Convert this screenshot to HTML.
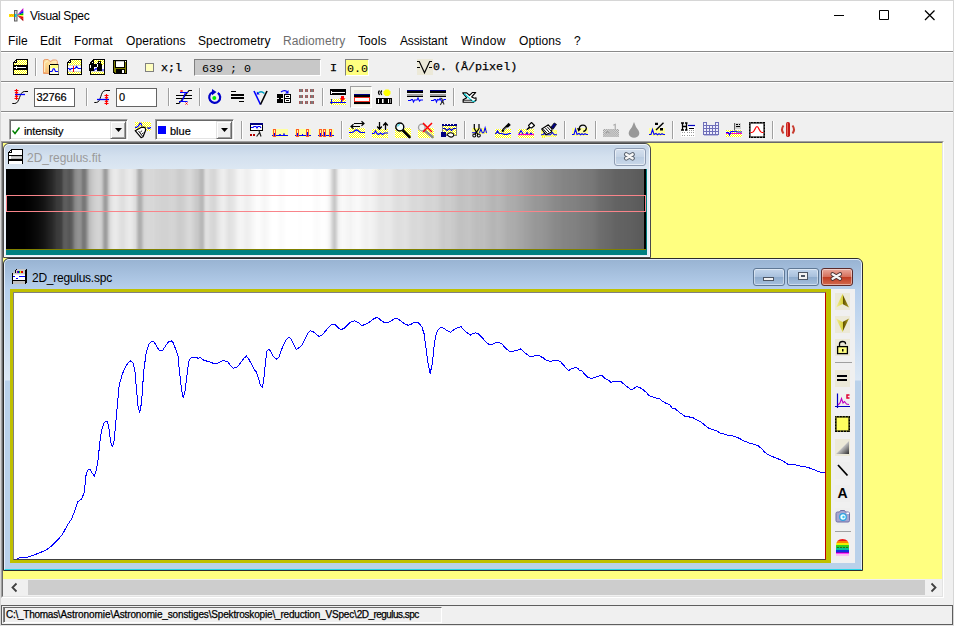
<!DOCTYPE html>
<html><head><meta charset="utf-8"><title>Visual Spec</title>
<style>
*{box-sizing:border-box;margin:0;padding:0}
html,body{width:954px;height:626px;overflow:hidden}
body{position:relative;background:#f0f0f0;font-family:"Liberation Sans",sans-serif;font-size:12px;color:#000}
.abs{position:absolute;display:block}
.t{position:absolute;white-space:pre;line-height:1}
.mono{font-family:"Liberation Mono",monospace;font-size:11.7px}
.m{letter-spacing:.1px}
.sb{-webkit-text-stroke:.25px #000}
.px{-webkit-text-stroke:.2px #000}
.hl{position:absolute;left:1px;width:952px;height:2px;border-top:1px solid #8a8a8a;border-bottom:1px solid #fff}
.vs{position:absolute;width:2px;height:18px;border-left:1px solid #a0a0a0;border-right:1px solid #fff}
.inp{position:absolute;background:#fff;border:1px solid #646464;font-size:11px}
.sunk{position:absolute;border:1px solid;border-color:#808080 #fff #fff #808080}
.ic{position:absolute;width:16px;height:16px;overflow:visible}
</style></head><body>
<!-- title + menu -->
<div class="abs" style="left:0;top:0;width:954px;height:51px;background:#fff"></div>
<div class="abs" style="left:0;top:0;width:954px;height:626px;border:1px solid #d6d6d6;border-bottom-color:#e4e4e4;pointer-events:none;z-index:50"></div>
<div class="t" id="title" style="left:30px;top:10px;font-size:12px;letter-spacing:-.35px">Visual Spec</div>
<svg class="abs" style="left:820px;top:0" width="134" height="30"><path d="M14 15.500h10M59.500 10.500h9v9h-9z" fill="none" stroke="#000" stroke-width="1"/><path d="M105 10.500l9.500 9.500M114.500 10.500l-9.500 9.500" fill="none" stroke="#000" stroke-width="1.250"/></svg>
<div id="menu">
<div class="t m" style="left:8px;top:35px">File</div>
<div class="t m" style="left:40px;top:35px">Edit</div>
<div class="t m" style="left:74px;top:35px">Format</div>
<div class="t m" style="left:126px;top:35px">Operations</div>
<div class="t m" style="left:198px;top:35px">Spectrometry</div>
<div class="t m" style="left:283px;top:35px;color:#6d6d6d">Radiometry</div>
<div class="t m" style="left:358px;top:35px">Tools</div>
<div class="t m" style="left:400px;top:35px;letter-spacing:-.15px">Assistant</div>
<div class="t m" style="left:461px;top:35px;letter-spacing:.35px">Window</div>
<div class="t m" style="left:519px;top:35px">Options</div>
<div class="t m" style="left:574px;top:35px">?</div>
</div>
<div class="hl" style="top:51px"></div>
<div class="hl" style="top:81px"></div>
<div class="hl" style="top:111px"></div>

<!-- toolbar 1 controls -->
<div class="vs" style="left:35px;top:58px"></div>
<div class="abs" style="left:145px;top:63px;width:9px;height:9px;background:#ffffc0;border:1px solid #808080"></div>
<div class="t mono sb" style="left:161px;top:63px">x;l</div>
<div class="sunk" style="left:194px;top:59px;width:127px;height:17px;background:#c8c8c8"></div>
<div class="t mono" style="left:202px;top:64px">639 ; 0</div>
<div class="t mono sb" style="left:330px;top:63px">I</div>
<div class="sunk" style="left:345px;top:59px;width:24px;height:17px;background:#ffff80"></div>
<div class="t mono" style="left:347px;top:64px">0.0</div>
<div class="t mono sb" style="left:433px;top:62px">0. (Å/pixel)</div>

<!-- toolbar 2 controls -->
<div class="inp" style="left:34px;top:88px;width:41px;height:19px"></div>
<div class="t px" style="left:36.500px;top:92px;font-size:11px;letter-spacing:-.1px">32766</div>
<div class="vs" style="left:86px;top:88px"></div>
<div class="inp" style="left:116px;top:88px;width:41px;height:19px"></div>
<div class="t px" style="left:119px;top:92px;font-size:11px">0</div>
<div class="vs" style="left:168px;top:88px"></div>
<div class="vs" style="left:199px;top:88px"></div>
<div class="vs" style="left:322px;top:88px"></div>
<div class="abs" style="left:350px;top:86px;width:22px;height:22px;background:#f7f7f2;border:1px solid;border-color:#a0a0a0 #fff #fff #a0a0a0"></div>
<div class="vs" style="left:399px;top:88px"></div>
<div class="vs" style="left:453px;top:88px"></div>

<!-- toolbar 3 controls -->
<style>.cbx{position:absolute;top:119px;height:21px;background:#fff;border:1px solid;border-color:#a0a0a0 #fff #fff #a0a0a0;box-shadow:inset 1px 1px 0 #696969,inset -1px -1px 0 #e3e3e3}
.cbb{position:absolute;top:121px;width:15px;height:18px;background:#f0f0f0;border:1px solid;border-color:#e3e3e3 #696969 #696969 #e3e3e3;box-shadow:inset 1px 1px 0 #fff,inset -1px -1px 0 #a0a0a0}</style>
<div class="cbx" style="left:9px;width:119px"></div>
<svg class="abs" style="left:12px;top:126px" width="9" height="9"><path d="M0.500 4.500l2.500 3L7.500 1.500" fill="none" stroke="#008000" stroke-width="1.500"/></svg>
<div class="t px" style="left:24px;top:126px;font-size:11px;letter-spacing:-.1px">intensity</div>
<div class="cbb" style="left:110px;width:16px"></div>
<svg class="abs" style="left:115px;top:128px" width="7" height="4"><path d="M0 0h7L3.500 4z" fill="#000"/></svg>
<div class="cbx" style="left:155px;width:79px"></div>
<div class="abs" style="left:158px;top:126px;width:8px;height:8px;background:#0000ff"></div>
<div class="t px" style="left:170px;top:126px;font-size:11px">blue</div>
<div class="cbb" style="left:216px;width:16px"></div>
<svg class="abs" style="left:221px;top:128px" width="7" height="4"><path d="M0 0h7L3.500 4z" fill="#000"/></svg>
<div class="vs" style="left:241px;top:121px"></div>
<div class="vs" style="left:341px;top:121px"></div>
<div class="vs" style="left:464px;top:121px"></div>
<div class="vs" style="left:564px;top:121px"></div>
<div class="vs" style="left:595px;top:121px"></div>
<div class="vs" style="left:672px;top:121px"></div>
<div class="vs" style="left:772px;top:121px"></div>

<svg width="0" height="0" style="position:absolute"><defs>
<pattern id="dy" width="2" height="2" patternUnits="userSpaceOnUse"><rect width="2" height="2" fill="#fff"/><rect width="1" height="1" fill="#ff0"/><rect x="1" y="1" width="1" height="1" fill="#ff0"/></pattern>
<pattern id="dg" width="2" height="2" patternUnits="userSpaceOnUse"><rect width="2" height="2" fill="#e4e4e4"/><rect width="1" height="1" fill="#9a9a9a"/><rect x="1" y="1" width="1" height="1" fill="#9a9a9a"/></pattern>
<pattern id="dw" width="2" height="2" patternUnits="userSpaceOnUse"><rect width="2" height="2" fill="#fff"/><rect width="1" height="1" fill="#f0f0f0"/><rect x="1" y="1" width="1" height="1" fill="#f0f0f0"/></pattern>
</defs></svg>
<!-- ===== toolbar 1 ===== -->
<svg class="ic" style="left:13px;top:59px" viewBox="0 0 16 16"><g shape-rendering="crispEdges"><path d="M3 0H15V16H0V3z" fill="#000"/><path d="M4 1H14V6H1V4H4z" fill="url(#dy)"/><rect x="1" y="11" width="13" height="4" fill="url(#dy)"/><rect x="1" y="8" width="12" height="1" fill="#fff"/><rect x="3" y="7" width="1" height="3" fill="#fff"/><rect x="2" y="2" width="1" height="1" fill="#fff"/></g></svg>
<svg class="ic" style="left:43px;top:59px" viewBox="0 0 16 16"><defs><linearGradient id="gf" x1="1" y1="0" x2="0" y2="1"><stop offset="0" stop-color="#fff3c8"/><stop offset=".6" stop-color="#fbd58c"/><stop offset="1" stop-color="#f3a763"/></linearGradient></defs><path d="M0.500 14.500V2.200q0-1.700 1.700-1.700h3l1.600 1.800H8.300l1-1.300h3.400q1.600 0 1.600 1.600V14.500z" fill="url(#gf)" stroke="#eb9c6a"/><path d="M1.600 13V4l3-2.300" fill="none" stroke="#fdebc0" stroke-width="1.300"/><g shape-rendering="crispEdges"><path d="M7 5H16V16H6V6z" fill="#000"/><rect x="7" y="6" width="8" height="3" fill="#ffff80"/><rect x="7" y="9" width="8" height="6" fill="#ffffe1"/><rect x="7" y="6" width="1" height="1" fill="#fff"/><rect x="15" y="5" width="1" height="10" fill="#808080"/></g><path d="M7 12.500h2l1.200-2.800 1 0 1.300 2.800H15" fill="none" stroke="#00f" stroke-width="1.100"/></svg>
<svg class="ic" style="left:67px;top:59px" viewBox="0 0 16 16"><g shape-rendering="crispEdges"><path d="M3 0H15V16H0V3z" fill="#000"/><path d="M4 1H14V6H1V4H4z" fill="url(#dy)"/><rect x="1" y="6" width="13" height="7" fill="#fff"/><rect x="1" y="6" width="13" height="1" fill="#d8d8d8"/><rect x="1" y="12" width="13" height="1" fill="#d8d8d8"/><rect x="1" y="13" width="13" height="2" fill="url(#dy)"/><rect x="2" y="2" width="1" height="1" fill="#fff"/></g><path d="M1 9.500h1l1 1.300 1.300-1.300H8l1.500-2 1.700 2H14" fill="none" stroke="#00f" stroke-width="1.100"/><rect x="6" y="7" width="1" height="6" fill="#f00" shape-rendering="crispEdges"/></svg>
<svg class="ic" style="left:89px;top:59px" viewBox="0 0 16 16"><g shape-rendering="crispEdges"><path d="M4 0H16V16H1V3z" fill="#000"/><path d="M5 1H15V6H2V4H5z" fill="url(#dy)"/><rect x="2" y="6" width="13" height="7" fill="#fff"/><rect x="2" y="13" width="13" height="2" fill="url(#dy)"/><rect x="2" y="12" width="13" height="1" fill="#d8d8d8"/></g><path d="M2 11.500h3l2-2 2 1.500h6" fill="none" stroke="#00f" stroke-width="1.100"/><g shape-rendering="crispEdges" fill="#000"><rect x="0" y="5" width="5" height="7"/><rect x="1" y="4" width="4" height="1"/><rect x="2" y="2" width="3" height="2"/><rect x="8" y="5" width="5" height="7"/><rect x="8" y="4" width="4" height="1"/><rect x="9" y="2" width="3" height="2"/><rect x="5" y="5" width="3" height="3"/><rect x="1" y="6" width="1" height="3" fill="#fff"/><rect x="8" y="5" width="1" height="3" fill="#fff"/><rect x="3" y="3" width="1" height="1" fill="#fff"/><rect x="10" y="3" width="1" height="1" fill="#fff"/></g></svg>
<svg class="ic" style="left:112px;top:59px" viewBox="0 0 16 16"><g shape-rendering="crispEdges"><path d="M1 1H15V15H2L1 14z" fill="#000"/><path d="M2 2H14V14H3L2 13z" fill="#808000"/><rect x="4" y="2" width="8" height="6" fill="#fff"/><rect x="4" y="2" width="8" height="1" fill="#c8c8c8"/><rect x="3" y="1" width="1" height="8" fill="#000"/><rect x="12" y="1" width="1" height="8" fill="#000"/><rect x="3" y="8" width="10" height="1" fill="#000"/><rect x="4" y="10" width="9" height="5" fill="#000"/><rect x="10" y="11" width="2" height="3" fill="#fff"/><rect x="13" y="2" width="1" height="1" fill="#fff"/></g></svg>
<svg class="ic" style="left:417px;top:59px" viewBox="0 0 16 16"><rect x="0" y="0" width="16" height="16" fill="#ece9d8"/><path d="M0 2.500h2.300L7.500 13.800 12.700 2.500H15M0 8.500h3M12 8.500h3" fill="none" stroke="#000" stroke-width="1.150"/></svg>
<!-- ===== toolbar 2 ===== -->
<svg class="ic" style="left:12px;top:89px" viewBox="0 0 16 16"><path d="M0.300 14.500h2.500c5 0 4.500-12 9.500-12H16" fill="none" stroke="#000" stroke-width="1"/><path d="M3 5.500h10" stroke="#00f" stroke-width="1.300"/><path d="M4.500 0v4M2.500 1.500h4M3 3l1.500 1.700L6 3M4.500 11V7M2.500 9.500h4M3 8l1.500-1.700L6 8" fill="none" stroke="#f00" stroke-width="1.100"/></svg>
<svg class="ic" style="left:94px;top:89px" viewBox="0 0 16 16"><path d="M0.300 13.500h2c5 0 4-12 9-12H16" fill="none" stroke="#000" stroke-width="1"/><path d="M3 10.500h12" stroke="#00f" stroke-width="1.300"/><path d="M12.500 5v4.500M10.500 6.500h4M11 8l1.500 1.700L14 8M12.500 16v-4.500M10.500 14.500h4M11 13l1.500-1.700L14 13" fill="none" stroke="#f00" stroke-width="1.100"/></svg>
<svg class="ic" style="left:176px;top:89px" viewBox="0 0 16 16"><path d="M0 6.500h16M0 9.500h16" stroke="#000" stroke-width="1.200"/><path d="M0 14.500h3L13 1.500h3" fill="none" stroke="#000" stroke-width="1.200"/><path d="M4 3.500h8M3 12.500h8.500M9.500 3.500L6 12.500" fill="none" stroke="#00f" stroke-width="1.200"/><path d="M4.500 1l2 2M6.500 1l-2 2M9.500 13.500l2 2M11.500 13.500l-2 2" stroke="#f00" stroke-width="1"/></svg>
<svg class="ic" style="left:206px;top:89px" viewBox="0 0 16 16"><path d="M11.800 3.800A5.500 5.500 0 1 1 6.500 3.300" fill="none" stroke="#0000c8" stroke-width="2.200"/><path d="M6 0l4.500 3L6 6.200z" fill="#0000c8"/><circle cx="8.300" cy="9" r="2" fill="#00e800"/><rect x="12" y="4" width="2" height="1" fill="#00f"/></svg>
<svg class="ic" style="left:230px;top:89px" viewBox="0 0 16 16" shape-rendering="crispEdges"><rect x="1" y="2" width="5" height="1" fill="#000"/><rect x="1" y="5" width="13" height="2" fill="#000"/><rect x="1" y="8" width="13" height="2" fill="#000"/><rect x="9" y="12" width="5" height="1" fill="#000"/></svg>
<svg class="ic" style="left:253px;top:89px" viewBox="0 0 16 16"><path d="M1 2L7.500 15.500" stroke="#00f" stroke-width="1.600"/><path d="M14 2L7.500 15.500" stroke="#000" stroke-width="1.600"/><path d="M4.500 4.500q3.500-3.500 7 0" fill="none" stroke="#00a0c0" stroke-width="1.300"/><path d="M3.800 2.500v3h3z" fill="#00f"/></svg>
<svg class="ic" style="left:276px;top:89px" viewBox="0 0 16 16"><g shape-rendering="crispEdges"><rect x="1" y="5" width="6" height="4" fill="#000"/><rect x="1" y="10" width="6" height="4" fill="#000"/><rect x="3" y="9" width="2" height="1" fill="#000"/><rect x="8" y="5" width="7" height="9" fill="#000"/><rect x="9" y="6" width="5" height="3" fill="#fff"/><rect x="9" y="10" width="5" height="3" fill="#fff"/><rect x="10" y="7" width="3" height="1" fill="#000"/><rect x="10" y="11" width="3" height="1" fill="#000"/></g><path d="M5 3q3-2.500 6-.5" fill="none" stroke="#00f" stroke-width="1.300"/><path d="M12.500 1v3.500H9z" fill="#00f"/></svg>
<svg class="ic" style="left:299px;top:89px" viewBox="0 0 17 16" shape-rendering="crispEdges"><g fill="#a65a5a"><rect x="0" y="0" width="4" height="3"/><rect x="6" y="0" width="4" height="3"/><rect x="12" y="0" width="4" height="3"/><rect x="0" y="6" width="4" height="3"/><rect x="6" y="6" width="4" height="3"/><rect x="12" y="6" width="4" height="3"/><rect x="0" y="12" width="4" height="3"/><rect x="6" y="12" width="4" height="3"/><rect x="12" y="12" width="4" height="3"/></g><g fill="#7c7c7c"><rect x="1" y="0" width="2" height="3"/><rect x="7" y="0" width="2" height="3"/><rect x="13" y="0" width="2" height="3"/><rect x="1" y="6" width="2" height="3"/><rect x="7" y="6" width="2" height="3"/><rect x="13" y="6" width="2" height="3"/><rect x="1" y="12" width="2" height="3"/><rect x="7" y="12" width="2" height="3"/><rect x="13" y="12" width="2" height="3"/></g></svg>
<svg class="ic" style="left:330px;top:89px" viewBox="0 0 16 16"><g shape-rendering="crispEdges"><rect x="0" y="0" width="16" height="6" fill="#000"/><rect x="2" y="3" width="13" height="1" fill="#fff"/><rect x="1" y="2" width="1" height="3" fill="#fff"/><rect x="0" y="10" width="16" height="6" fill="url(#dy)"/><rect x="0" y="13" width="16" height="1" fill="#00f"/><rect x="1" y="10" width="1" height="5" fill="#00f"/><rect x="11" y="11" width="1" height="3" fill="#00f"/></g><path d="M11 7h3v2.200h1.500L12.500 12 9.500 9.200H11z" fill="#f00"/></svg>
<svg class="ic" style="left:354px;top:89px" viewBox="0 0 16 16" shape-rendering="crispEdges"><rect x="0" y="1" width="16" height="15" fill="#ece9d8"/><rect x="0" y="5" width="16" height="1" fill="#000080"/><rect x="0" y="6" width="16" height="2" fill="#000"/><rect x="0" y="8" width="16" height="5" fill="#f03020"/><rect x="1" y="9" width="14" height="3" fill="#fff"/><rect x="0" y="13" width="16" height="2" fill="#000"/></svg>
<svg class="ic" style="left:376px;top:89px" viewBox="0 0 16 16"><path d="M9.500 0.500h3l2 2v2.500l-2 2h-3l-2-2V2.500z" fill="#ff0"/><path d="M3.500 1.500q-2 2 0 4.500M5.800 1.500q-2 2 0 4.500" fill="none" stroke="#000" stroke-width="1.200"/><g shape-rendering="crispEdges"><rect x="0" y="9" width="16" height="6" fill="#000"/><rect x="2" y="10" width="1" height="4" fill="#fff"/><rect x="6" y="10" width="1" height="4" fill="#fff"/><rect x="7" y="10" width="1" height="4" fill="#999"/><rect x="12" y="10" width="1" height="4" fill="#fff"/><rect x="14" y="10" width="1" height="4" fill="#888"/></g></svg>
<svg class="ic" style="left:407px;top:89px" viewBox="0 0 16 16"><g shape-rendering="crispEdges"><rect x="0" y="1" width="16" height="1" fill="#000080"/><rect x="0" y="2" width="16" height="2" fill="#000"/><rect x="0" y="5" width="16" height="2" fill="#a0a0a0"/><rect x="0" y="7" width="16" height="1" fill="#000"/></g><path d="M1 11.500h2.500l1-1 1 0 1 2.500 1-2 2.500 0 1-2 1.500 3 1-1H16" fill="none" stroke="#00f" stroke-width="1.100"/></svg>
<svg class="ic" style="left:430px;top:89px" viewBox="0 0 16 16"><g shape-rendering="crispEdges"><rect x="0" y="1" width="16" height="1" fill="#000080"/><rect x="0" y="2" width="16" height="2" fill="#000"/><rect x="0" y="5" width="16" height="2" fill="#a0a0a0"/><rect x="0" y="7" width="16" height="1" fill="#000"/></g><path d="M1 11.500h2.500l1-1 1 0 1 2.500 1-2.500 1.500.5 1-1.500 2 3.500 2-2.500H16" fill="none" stroke="#00f" stroke-width="1.100"/><path d="M10.500 9.500q1.500-.5 2 2l1.500 4M12.600 12l-2.300 4" fill="none" stroke="#333" stroke-width="1.100"/></svg>
<svg class="ic" style="left:461px;top:89px" viewBox="0 0 16 16"><g transform="translate(0.800 1.800) scale(0.900 0.820)"><path d="M1 2.500h4.500l3 3 3.500-3.500h3.500l-4.500 5.500 3 1.500 1.800-.5v3l-3 2.500H1.500v-3l4-2.500z" fill="#fff" stroke="#000" stroke-width="1.300" stroke-linejoin="round"/><path d="M2.500 3.500l9.500 9.300h3" fill="none" stroke="#00d8e0" stroke-width="1.400"/><path d="M1.500 11.500h10" stroke="#000" stroke-width="1"/></g></svg>
<!-- ===== toolbar 3 ===== -->
<svg class="ic" style="left:134px;top:121px;width:17px;height:17px" viewBox="0 0 17 17"><rect x="1" y="1" width="16" height="9" fill="url(#dy)" shape-rendering="crispEdges"/><path d="M1 6.400h1.500l2-1.500 1.500-2.700 1 .2.800 2.400M13.300 6.400l1.500 1.100 2-1.100" fill="none" stroke="#00f" stroke-width="1.200"/><path d="M7.500 6.200l3.500.2.700 2.500-2.700 6.900-1.900.9-5.900-7z" fill="#fff" stroke="#000" stroke-width="1.250" stroke-linejoin="round"/><path d="M4.500 10l4 5.200M6.300 11.200l1.800-1.500M7.600 13.200l1.800-1.500" fill="none" stroke="#000" stroke-width=".9"/></svg>
<svg class="ic" style="left:249px;top:122px" viewBox="0 0 16 16"><g shape-rendering="crispEdges"><rect x="1" y="1" width="13" height="8" fill="#000"/><rect x="1" y="1" width="13" height="2" fill="#000080"/><rect x="2" y="3" width="11" height="5" fill="#fff"/><rect x="1" y="12" width="2" height="2" fill="#b00000"/><rect x="4" y="12" width="2" height="2" fill="#b00000"/></g><path d="M2 5.500h2l1-1h2l1 1.500 1-1.500h2l1 1.500" fill="none" stroke="#00f" stroke-width="1.200"/><path d="M8.500 8.500q1.500-.5 2 1.500l1.500 4.500M10.600 10.500l-3 4" fill="none" stroke="#222" stroke-width="1.200"/></svg>
<svg class="ic" style="left:272px;top:122px" viewBox="0 0 16 16"><rect x="0" y="7" width="16" height="8" fill="#ffffa0"/><path d="M0 13.500h3.500v-3h0v3H8v-1.500h0v1.500h4v-2h0v2H16" fill="none" stroke="#00f" stroke-width="1"/><rect x="1.500" y="7.500" width="2" height="7" fill="none" stroke="#ff5a28" stroke-width="1"/><rect x="2" y="11" width="1" height="3" fill="#00f"/></svg>
<svg class="ic" style="left:295px;top:122px" viewBox="0 0 16 16"><rect x="0" y="7" width="16" height="8" fill="#ffffa0"/><path d="M0 13.500H16" fill="none" stroke="#00f" stroke-width="1"/><rect x="1.500" y="7.500" width="2" height="7" fill="none" stroke="#ff5a28"/><rect x="11.500" y="7.500" width="2" height="7" fill="none" stroke="#ff5a28"/><rect x="2" y="11" width="1" height="3" fill="#00f"/><rect x="12" y="10" width="1" height="4" fill="#00f"/><rect x="7" y="12" width="1" height="2" fill="#00f"/></svg>
<svg class="ic" style="left:318px;top:122px" viewBox="0 0 16 16"><rect x="0" y="7" width="16" height="8" fill="#ffffa0"/><path d="M0 13.500H16" fill="none" stroke="#00f" stroke-width="1"/><rect x="1.500" y="7.500" width="2" height="7" fill="none" stroke="#ff5a28"/><rect x="5.500" y="7.500" width="2" height="7" fill="none" stroke="#ff5a28"/><rect x="11.500" y="7.500" width="2" height="7" fill="none" stroke="#ff5a28"/><rect x="2" y="11" width="1" height="3" fill="#00f"/><rect x="6" y="10" width="1" height="4" fill="#00f"/><rect x="12" y="10" width="1" height="4" fill="#00f"/></svg>
<svg class="ic" style="left:349px;top:122px" viewBox="0 0 16 16"><rect x="0" y="6" width="16" height="10" fill="url(#dy)" shape-rendering="crispEdges"/><path d="M0 10.500h2.500q2-.2 3-1.500 2-2 4 0 1.200 1.400 3 1.500H16" fill="none" stroke="#00f" stroke-width="1.200"/><path d="M5 1.500h10M12.500-.8l2.500 2.300-2.500 2.300M2 4.500h9M4.500 2.200L2 4.500l2.500 2.300" fill="none" stroke="#000" stroke-width="1.200"/></svg>
<svg class="ic" style="left:372px;top:122px" viewBox="0 0 16 16"><rect x="0" y="7" width="16" height="9" fill="url(#dy)" shape-rendering="crispEdges"/><path d="M0 11.500h2l1.500-2.500 1.500 2.500 1.500 1 2-1.500 2 1.500 2-1.500H16" fill="none" stroke="#00f" stroke-width="1.200"/><path d="M7.500 0v7M5.200 4.500l2.300 2.700 2.300-2.700M13.500 8V1M11.200 3.500L13.500.8l2.300 2.700" fill="none" stroke="#000" stroke-width="1.300"/></svg>
<svg class="ic" style="left:395px;top:122px" viewBox="0 0 16 16"><rect x="0" y="6" width="16" height="10" fill="url(#dy)" shape-rendering="crispEdges"/><path d="M7.500 8L14.500 15" stroke="#000" stroke-width="2.600" stroke-linecap="round"/><circle cx="4.800" cy="5" r="4" fill="#f4ffff" stroke="#000" stroke-width="1.400"/><path d="M2.500 4.500q.5-2 2.500-2" fill="none" stroke="#40d0e0" stroke-width="1.200"/></svg>
<svg class="ic" style="left:418px;top:122px" viewBox="0 0 16 16"><rect x="0" y="6" width="16" height="10" fill="url(#dy)" shape-rendering="crispEdges"/><path d="M6.500 8.500L14.500 15" stroke="#8a8a8a" stroke-width="2.600" stroke-linecap="round"/><circle cx="3.800" cy="5.500" r="3.300" fill="#f0f0f0" stroke="#a0a0a0" stroke-width="1.300"/><path d="M5 1l9 9M14 1L5 10" stroke="#f00" stroke-width="1.500"/></svg>
<svg class="ic" style="left:441px;top:122px" viewBox="0 0 16 16"><g shape-rendering="crispEdges"><rect x="1" y="2" width="15" height="12" fill="#808080"/><rect x="1" y="2" width="15" height="2" fill="#000080"/><rect x="2" y="4" width="13" height="9" fill="url(#dy)"/><rect x="0" y="10" width="5" height="5" fill="#000080"/><rect x="3" y="2" width="1" height="1" fill="#fff"/><rect x="6" y="2" width="1" height="1" fill="#fff"/><rect x="9" y="2" width="1" height="1" fill="#fff"/><rect x="12" y="2" width="1" height="1" fill="#fff"/></g><path d="M2 6.500h2l2 2 2.500-2 2 2 2-2H15" fill="none" stroke="#0000c0" stroke-width="1.200"/><path d="M6 12.500q2-2.500 5-1.500 3 1 1 3.500-3 2-6-2z" fill="#fff" stroke="#000" stroke-width="1.100"/></svg>
<svg class="ic" style="left:471px;top:122px" viewBox="0 0 17 17"><rect x="1" y="6" width="16" height="7" fill="url(#dy)" shape-rendering="crispEdges"/><path d="M1 11.500h3l1.500-1M9 11.500l1.500-4 1.500 4 1.500 0 1.500-5.500 1.500 5.500" fill="none" stroke="#00f" stroke-width="1.100"/><path d="M3.500 2v5l4 6.500M8.500 2v5l-4.500 6.500" fill="none" stroke="#000" stroke-width="1.300"/><circle cx="3.500" cy="14.300" r="1.600" fill="none" stroke="#000" stroke-width="1.100"/><circle cx="8.300" cy="14.300" r="1.600" fill="none" stroke="#000" stroke-width="1.100"/></svg>
<svg class="ic" style="left:495px;top:122px" viewBox="0 0 16 16"><rect x="0" y="7" width="16" height="9" fill="url(#dy)" shape-rendering="crispEdges"/><path d="M0 11.500h1l1.500-2.500 1.500 2.500h3l2 .800h3.500l1.500-.800H16" fill="none" stroke="#00f" stroke-width="1.200"/><path d="M7.300 9.700l1.200-2.200 3.500-3.500" stroke="#000" stroke-width="2.200" fill="none" stroke-linejoin="round"/><path d="M10.800 3.800l2.800-3 2.200 2.200-3 2.800z" fill="#000"/><path d="M8.600 8l2.800-2.800" stroke="#fff" stroke-width=".7"/></svg>
<svg class="ic" style="left:518px;top:122px" viewBox="0 0 16 16"><rect x="0" y="7" width="16" height="9" fill="url(#dy)" shape-rendering="crispEdges"/><path d="M0 12.500H16" stroke="#ff00c8" stroke-width="1.300"/><path d="M1 12l2-3.500 2 3.500M8 12l1-1.500 1 1.500M12 12l1-1 1 1" fill="none" stroke="#00f" stroke-width="1.100"/><path d="M9 7.500l2.500-2.500-1-1.500 3-3 3 3-3 2.500-1.500-.5z" fill="#fff" stroke="#000" stroke-width="1.100" stroke-linejoin="round"/></svg>
<svg class="ic" style="left:541px;top:122px" viewBox="0 0 17 17"><rect x="0" y="8" width="17" height="8" fill="url(#dy)" shape-rendering="crispEdges"/><path d="M0 13.500h2l1.500-1.500 1.500 1.500h5l2-2.500 2 2.500H17" fill="none" stroke="#00f" stroke-width="1.100"/><path d="M0.800 7.500l7-4.500 4 4.500-1 3.500-5.500 2.500z" fill="#fff" stroke="#000" stroke-width="1.200" stroke-linejoin="round"/><path d="M2.500 7.500l4 4.500M4.500 6.200l4 4.500M6.500 5l4 4.500" stroke="#000" stroke-width="1"/><path d="M10.500 5.500l3.500-4.500 2.500 1.500-3.500 5z" fill="#000080" stroke="#000" stroke-width=".8"/><rect x="1" y="14" width="1" height="3" fill="#ff0"/><rect x="3" y="14" width="1" height="3" fill="#ff0"/></svg>
<svg class="ic" style="left:572px;top:122px" viewBox="0 0 16 16"><rect x="0" y="6" width="16" height="8" fill="#ffffa0"/><path d="M0 12.500h2l1.500-5.500 1.500 5.500 2-1 1.500 1.200 1.500-1 1.500 1 1.500-1 1.500.800H16" fill="none" stroke="#00f" stroke-width="1.100"/><path d="M7.200 7.500C7.200 4.500 9 3.200 11 3.200S14.600 4.500 14.300 6.700 13 9.300 11.300 9.500" fill="none" stroke="#000" stroke-width="1.300"/><path d="M5 6l4.300.800-2.800 3z" fill="#000"/></svg>
<svg class="ic" style="left:603px;top:122px" viewBox="0 0 17 16"><rect x="0" y="7" width="17" height="8" fill="url(#dg)" shape-rendering="crispEdges"/><path d="M11 3l2-1v5.500" fill="none" stroke="#a8a8a8" stroke-width="1.200"/><path d="M3 11.500l2-2 2 2" fill="none" stroke="#909090" stroke-width="1"/></svg>
<svg class="ic" style="left:626px;top:122px" viewBox="0 0 16 16"><path d="M8 0q1.500 5 4.500 8.500 2 3.500-.8 6-3.700 2.500-7.400 0-2.800-2.500-.8-6Q6.500 5 8 0z" fill="#989898"/></svg>
<svg class="ic" style="left:649px;top:122px" viewBox="0 0 16 16"><rect x="0" y="6" width="16" height="8" fill="#ffffa0"/><path d="M0 12.500h2l1.500-5 1.500 5 2-1 1.500 1.200 1.500-1 1.500 1 1.500-1 1.500.8H16" fill="none" stroke="#00f" stroke-width="1.100"/><path d="M6 1.500h3M14.500.8L7 8" stroke="#000" stroke-width="1.400"/><rect x="6" y="1" width="3" height="2" fill="#000"/><rect x="11" y="6" width="3" height="2.500" fill="#000"/></svg>
<svg class="ic" style="left:680px;top:122px" viewBox="0 0 16 16"><rect x="1" y="4" width="14" height="11" fill="#fff"/><path d="M1 1h3M1 8h3M5 1h2.500M5 8h2.500M2.500 1v7M6.500 1v7M2.500 4.500h4" stroke="#000" stroke-width="1.300"/><path d="M8 3.500h7" stroke="#0000c0" stroke-width="1.200"/><path d="M9 6.500h5" stroke="#000" stroke-width="1"/><path d="M2 10.500h3M7 10.500h7M2 13.500h3M7 13.500h7M9 8.500h5" stroke="#9a9a9a" stroke-width="1" stroke-dasharray="1 1"/></svg>
<svg class="ic" style="left:703px;top:122px" viewBox="0 0 16 16"><g shape-rendering="crispEdges"><path d="M0 0H4V3H12V0H16V13H0z" fill="#6f6fb8"/><rect x="1" y="13" width="14" height="1" fill="#b8b8dc"/><g fill="#eeeefc"><rect x="1" y="1" width="2" height="2"/><rect x="13" y="1" width="2" height="2"/><rect x="1" y="4" width="2" height="2"/><rect x="4" y="4" width="2" height="2"/><rect x="7" y="4" width="2" height="2"/><rect x="10" y="4" width="2" height="2"/><rect x="13" y="4" width="2" height="2"/><rect x="1" y="7" width="2" height="2"/><rect x="4" y="7" width="2" height="2"/><rect x="7" y="7" width="2" height="2"/><rect x="10" y="7" width="2" height="2"/><rect x="13" y="7" width="2" height="2"/><rect x="1" y="10" width="2" height="2"/><rect x="4" y="10" width="2" height="2"/><rect x="7" y="10" width="2" height="2"/><rect x="10" y="10" width="2" height="2"/><rect x="13" y="10" width="2" height="2"/></g></g></svg>
<svg class="ic" style="left:726px;top:122px" viewBox="0 0 16 16"><g shape-rendering="crispEdges"><rect x="0" y="8" width="16" height="7" fill="url(#dy)"/><rect x="0" y="11" width="16" height="1" fill="#ff00c8"/><rect x="8" y="1" width="7" height="6" fill="#d0d0d0"/><rect x="8" y="1" width="1" height="7" fill="#606060"/><rect x="10" y="2" width="2" height="1" fill="#000"/><rect x="13" y="2" width="1" height="1" fill="#000"/><rect x="10" y="4" width="4" height="1" fill="#000"/></g><path d="M0 10.500h2.500l1 2.500 1.500-3.500h3l1.500-.5 1.500 1H16" fill="none" stroke="#00f" stroke-width="1.100"/></svg>
<svg class="ic" style="left:749px;top:122px" viewBox="0 0 16 16"><rect x="0.800" y="0.800" width="14.400" height="14.400" fill="#fff" stroke="#000" stroke-width="1.600"/><rect x="0.800" y="0.800" width="14.400" height="14.400" fill="none" stroke="#fff" stroke-width="0.600" stroke-dasharray="1 2"/><path d="M1.500 10.500h1.500q1.500 0 2.800-3 1.300-3 2.200-3t2.200 3q1.300 3 2.800 3h1.500" fill="none" stroke="#f00" stroke-width="1.200"/></svg>
<svg class="ic" style="left:780px;top:122px" viewBox="0 0 16 16"><rect x="6" y="0" width="4" height="15" rx="1.800" fill="#c41818"/><rect x="6.800" y="1" width="1.200" height="13" fill="#e86a5a"/><path d="M3.500 3.500q-3 4 0 8M12.500 3.500q3 4 0 8" fill="none" stroke="#c83c30" stroke-width="2"/></svg>
<!-- ===== side toolbar (window 2) ===== -->
<div id="side" style="position:absolute;left:0;top:0;z-index:5">
<svg class="ic" style="left:835px;top:293px;height:17px" viewBox="0 0 16 17"><rect width="15" height="17" fill="#ece9d8"/><defs><linearGradient id="ga" x1="0" x2="1"><stop offset="0" stop-color="#f4f0a0"/><stop offset=".5" stop-color="#d8d040"/><stop offset=".55" stop-color="#605000"/><stop offset="1" stop-color="#b0a020"/></linearGradient></defs><path d="M7.500 1L14 14.500 7.500 11 1 14.500z" fill="url(#ga)"/></svg>
<svg class="ic" style="left:835px;top:316px;height:17px" viewBox="0 0 16 17"><rect width="15" height="17" fill="#ece9d8"/><path d="M7.500 16L14 2.500 7.500 6 1 2.500z" fill="url(#ga)"/></svg>
<svg class="ic" style="left:835px;top:339px;height:17px" viewBox="0 0 16 17"><rect width="15" height="17" fill="#ece9d8"/><path d="M4.500 7.500V4.800q0-2.300 3-2.300 3 0 3 2v.8" fill="none" stroke="#000" stroke-width="1.300"/><rect x="2.600" y="7.600" width="9.800" height="7" fill="#ffff80" stroke="#000" stroke-width="1.300"/><rect x="7" y="10" width="1.500" height="2.500" fill="#000"/></svg>
<svg class="ic" style="left:835px;top:370px;height:17px" viewBox="0 0 16 17" shape-rendering="crispEdges"><rect width="15" height="17" fill="#ece9d8"/><rect x="2" y="5" width="10" height="2" fill="#000"/><rect x="2" y="9" width="10" height="2" fill="#000"/><rect x="2" y="5" width="10" height="2" fill="#000"/></svg>
<svg class="ic" style="left:835px;top:393px;height:17px" viewBox="0 0 16 17"><path d="M2.500 0.500v14.500M0 13.500h15" stroke="#0000c0" stroke-width="1.200" fill="none"/><path d="M3 12l2-2 1.500-4.500L8 10l1.500-1.500 2 2.500 2.500.5" fill="none" stroke="#c000c0" stroke-width="1.100"/><path d="M14.500 2H12v3h2.500" fill="none" stroke="#e00030" stroke-width="1.500"/></svg>
<svg class="ic" style="left:835px;top:416px" viewBox="0 0 16 16"><rect x="0.800" y="0.800" width="13.400" height="14.400" fill="#ffff60" stroke="#000" stroke-width="1.600"/><rect x="0.800" y="0.800" width="13.400" height="14.400" fill="none" stroke="#ffff60" stroke-width="0.700" stroke-dasharray="1 2"/></svg>
<svg class="ic" style="left:835px;top:439px;height:17px" viewBox="0 0 16 17"><rect width="15" height="17" fill="#ece9d8"/><defs><linearGradient id="gg" x1="0" y1="0" x2="1" y2="1"><stop offset=".35" stop-color="#f0f0f0"/><stop offset="1" stop-color="#303030"/></linearGradient></defs><path d="M14 2V15H1z" fill="url(#gg)"/></svg>
<svg class="ic" style="left:835px;top:462px;height:17px" viewBox="0 0 16 17"><rect width="15" height="17" fill="#eeeeee"/><path d="M3 3l9.500 10.500" stroke="#000" stroke-width="1.800"/></svg>
<svg class="ic" style="left:835px;top:485px;height:17px" viewBox="0 0 16 17"><rect width="15" height="17" fill="#eeeeee"/><text x="7.500" y="13" text-anchor="middle" font-family="Liberation Sans" font-weight="bold" font-size="14" fill="#000">A</text></svg>
<svg class="ic" style="left:835px;top:508px;height:17px" viewBox="0 0 16 17"><rect width="15" height="17" fill="#eeeeee"/><path d="M1 5.500q0-1.500 1.500-1.500h2l1-1.500h4l1 1.500H13q1.500 0 1.500 1.500v7q0 1.500-1.500 1.500H2.500Q1 14 1 12.500z" fill="#a6a6d0" stroke="#7070a8" stroke-width="1"/><circle cx="8" cy="9" r="3.300" fill="#e8ffff" stroke="#30a0e0" stroke-width="1.300"/><circle cx="8.500" cy="9" r="1.200" fill="#40c0f0"/><rect x="11.500" y="4.500" width="2.500" height="1.500" fill="#fff"/></svg>
<svg class="ic" style="left:835px;top:538px;height:18px" viewBox="0 0 16 18"><defs><clipPath id="dome"><path d="M1 18V8q0-7 6.500-7T14 8v10z"/></clipPath></defs><g clip-path="url(#dome)" shape-rendering="crispEdges"><rect y="0" width="16" height="3" fill="#f01818"/><rect y="3" width="16" height="2" fill="#ff8000"/><rect y="5" width="16" height="2" fill="#f0f000"/><rect y="7" width="16" height="3" fill="#30d020"/><rect y="10" width="16" height="2" fill="#00c0a0"/><rect y="12" width="16" height="2" fill="#1030e0"/><rect y="14" width="16" height="1" fill="#8000c0"/><rect y="15" width="16" height="1" fill="#ff40ff"/><rect y="16" width="16" height="2" fill="#f8c0f0"/></g><path d="M2 9.500h11" stroke="#207020" stroke-width="1" stroke-dasharray="2 1"/></svg>
</div>
<!-- app icon -->
<svg class="abs" style="left:8px;top:7px" width="17" height="16" viewBox="0 0 17 16"><rect x="1" y="7" width="6" height="3" fill="#ffe000"/><rect x="2" y="8" width="1" height="1" fill="#ff9000"/><rect x="4" y="8" width="1" height="1" fill="#ff9000"/><rect x="3" y="7" width="1" height="1" fill="#ffa000"/><path d="M9 8.300L15.300 1v2.700z" fill="#c000c8"/><path d="M9 8.300L15.300 3.700v2.400z" fill="#0000f8"/><path d="M9 8.300L15.300 6.100v1.900z" fill="#00c000"/><path d="M9 8.300L15.300 8v1.800z" fill="#ffff30"/><path d="M9 8.300L15.300 9.800v2.400z" fill="#f00000"/><path d="M9 8.300L15.300 12.200v2z" fill="#b00000"/><rect x="6.500" y="3.500" width="2.500" height="10.500" fill="#d8d8d8" stroke="#606060" stroke-width="1"/><rect x="7" y="7" width="1.500" height="3" fill="#00d0d8"/></svg>
<div id="wicons" style="position:absolute;left:0;top:0;z-index:6">
<svg class="ic" style="left:8px;top:149px" viewBox="0 0 16 16"><g shape-rendering="crispEdges"><path d="M3 0H15V15H0V3z" fill="#000"/><path d="M4 1H14V6H1V4H4z" fill="#fff"/><rect x="2" y="2" width="1" height="1" fill="#fff"/><rect x="1" y="7" width="13" height="3" fill="#b4b4b4"/><rect x="3" y="8" width="11" height="1" fill="#d4d4d4"/><rect x="1" y="7" width="2" height="3" fill="#fff"/><rect x="1" y="12" width="13" height="3" fill="#fff"/></g></svg>
<svg class="ic" style="left:12px;top:268px" viewBox="0 0 16 16"><g shape-rendering="crispEdges"><path d="M1 7V4L4 1H13V7z" fill="#c8c8c8"/><rect x="1" y="6" width="12" height="1" fill="#e8e8e8"/><rect x="0" y="5" width="1" height="11" fill="#000"/><rect x="3" y="2" width="1" height="3" fill="#000"/><rect x="4" y="1" width="1" height="1" fill="#000"/><path d="M13 2L15 1V14L13 16z" fill="#000"/><rect x="5" y="3" width="1" height="2" fill="#8000a0"/><rect x="6" y="3" width="1" height="2" fill="#0000f0"/><rect x="7" y="3" width="1" height="2" fill="#00b000"/><rect x="8" y="3" width="1" height="2" fill="#f0f000"/><rect x="9" y="3" width="2" height="2" fill="#e00000"/><rect x="1" y="7" width="12" height="5" fill="#fff"/><rect x="1" y="8" width="2" height="1" fill="#00f"/><rect x="7" y="8" width="6" height="1" fill="#00f"/><rect x="4" y="10" width="2" height="1" fill="#00f"/><rect x="1" y="12" width="12" height="1" fill="#000"/><rect x="1" y="13" width="12" height="3" fill="#c0c0c0"/></g></svg>
</div>


<!-- MDI client -->
<div class="abs" style="left:1px;top:141px;width:943px;height:457px;border:1px solid;border-color:#a0a0a0 #fff #fff #a0a0a0"></div>
<div class="abs" style="left:2px;top:142px;width:941px;height:455px;border:1px solid;border-color:#696969 #e3e3e3 #e3e3e3 #696969;background:#ffff80"></div>

<!-- window 1 : fit -->
<div class="abs" style="left:3px;top:143px;width:648px;height:115px;border:1px solid #4a4a4a;border-radius:6px 6px 0 0;background:linear-gradient(#c2d3e6 0,#d3e0ee 12px,#dde8f3 26px,#e6eef7 27px);overflow:hidden">
 <div class="abs" style="left:0;top:0;right:0;bottom:0;border:1px solid #f4f8fc;border-radius:5px 5px 0 0"></div>
</div>
<div class="t" id="t1" style="left:27px;top:152px;font-size:12px;color:#9a9a9a">2D_regulus.fit</div>
<div class="abs" style="left:614px;top:148px;width:32px;height:18px;border:1px solid #8e9cb2;border-radius:3px;background:linear-gradient(#d5e0ee 0,#c4d3e5 50%,#b9cbe0 51%,#c9d8e9 100%);box-shadow:inset 0 0 0 1px rgba(255,255,255,.55)"></div>
<svg class="abs" style="left:623px;top:152px" width="13" height="10"><path d="M3.200 2.400l6.400 4M9.600 2.400l-6.400 4" stroke="#5a626e" stroke-width="4.400" stroke-linecap="round"/><path d="M3.200 2.400l6.400 4M9.600 2.400l-6.400 4" stroke="#f6f6f6" stroke-width="2.500" stroke-linecap="round"/></svg>
<div class="abs" style="left:6px;top:169px;width:641px;height:86px;background:#008080"></div>
<div class="abs" style="left:6px;top:169px;width:640px;height:81px;background:#000;border-right:1px solid #808000;border-bottom:1px solid #808000"></div>
<svg class="abs" style="left:6px;top:169px" width="640" height="80" shape-rendering="crispEdges"><rect x="0" width="19" height="80" fill="#000000"/><rect x="19" width="1" height="80" fill="#010101"/><rect x="20" width="2" height="80" fill="#020202"/><rect x="22" width="2" height="80" fill="#030303"/><rect x="24" width="1" height="80" fill="#040404"/><rect x="25" width="1" height="80" fill="#050505"/><rect x="26" width="1" height="80" fill="#060606"/><rect x="27" width="1" height="80" fill="#070707"/><rect x="28" width="1" height="80" fill="#080808"/><rect x="29" width="1" height="80" fill="#090909"/><rect x="30" width="1" height="80" fill="#0a0a0a"/><rect x="31" width="1" height="80" fill="#0b0b0b"/><rect x="32" width="1" height="80" fill="#0c0c0c"/><rect x="33" width="1" height="80" fill="#0e0e0e"/><rect x="34" width="1" height="80" fill="#0f0f0f"/><rect x="35" width="1" height="80" fill="#111111"/><rect x="36" width="1" height="80" fill="#121212"/><rect x="37" width="1" height="80" fill="#141414"/><rect x="38" width="1" height="80" fill="#161616"/><rect x="39" width="1" height="80" fill="#181818"/><rect x="40" width="1" height="80" fill="#1b1b1b"/><rect x="41" width="1" height="80" fill="#1d1d1d"/><rect x="42" width="1" height="80" fill="#202020"/><rect x="43" width="1" height="80" fill="#222222"/><rect x="44" width="1" height="80" fill="#242424"/><rect x="45" width="1" height="80" fill="#262626"/><rect x="46" width="1" height="80" fill="#292929"/><rect x="47" width="1" height="80" fill="#2d2d2d"/><rect x="48" width="1" height="80" fill="#303030"/><rect x="49" width="1" height="80" fill="#343434"/><rect x="50" width="1" height="80" fill="#393939"/><rect x="51" width="1" height="80" fill="#3a3a3a"/><rect x="52" width="1" height="80" fill="#3b3b3b"/><rect x="53" width="1" height="80" fill="#3c3c3c"/><rect x="54" width="1" height="80" fill="#3f3f3f"/><rect x="55" width="1" height="80" fill="#424242"/><rect x="56" width="1" height="80" fill="#4d4d4d"/><rect x="57" width="1" height="80" fill="#585858"/><rect x="58" width="1" height="80" fill="#5c5c5c"/><rect x="59" width="2" height="80" fill="#5d5d5d"/><rect x="61" width="1" height="80" fill="#5a5a5a"/><rect x="62" width="1" height="80" fill="#585858"/><rect x="63" width="1" height="80" fill="#565656"/><rect x="64" width="1" height="80" fill="#595959"/><rect x="65" width="1" height="80" fill="#5d5d5d"/><rect x="66" width="1" height="80" fill="#666666"/><rect x="67" width="1" height="80" fill="#727272"/><rect x="68" width="1" height="80" fill="#7f7f7f"/><rect x="69" width="1" height="80" fill="#888888"/><rect x="70" width="1" height="80" fill="#8c8c8c"/><rect x="71" width="1" height="80" fill="#909090"/><rect x="72" width="2" height="80" fill="#929292"/><rect x="74" width="1" height="80" fill="#8f8f8f"/><rect x="75" width="1" height="80" fill="#888888"/><rect x="76" width="1" height="80" fill="#7c7c7c"/><rect x="77" width="2" height="80" fill="#787878"/><rect x="79" width="1" height="80" fill="#7f7f7f"/><rect x="80" width="1" height="80" fill="#8d8d8d"/><rect x="81" width="1" height="80" fill="#9d9d9d"/><rect x="82" width="1" height="80" fill="#acacac"/><rect x="83" width="1" height="80" fill="#bababa"/><rect x="84" width="1" height="80" fill="#bfbfbf"/><rect x="85" width="1" height="80" fill="#c4c4c4"/><rect x="86" width="1" height="80" fill="#c8c8c8"/><rect x="87" width="1" height="80" fill="#cbcbcb"/><rect x="88" width="1" height="80" fill="#cecece"/><rect x="89" width="1" height="80" fill="#d0d0d0"/><rect x="90" width="1" height="80" fill="#d2d2d2"/><rect x="91" width="1" height="80" fill="#d3d3d3"/><rect x="92" width="1" height="80" fill="#d4d4d4"/><rect x="93" width="1" height="80" fill="#d3d3d3"/><rect x="94" width="1" height="80" fill="#d0d0d0"/><rect x="95" width="1" height="80" fill="#cacaca"/><rect x="96" width="1" height="80" fill="#bdbdbd"/><rect x="97" width="1" height="80" fill="#adadad"/><rect x="98" width="1" height="80" fill="#a0a0a0"/><rect x="99" width="1" height="80" fill="#9c9c9c"/><rect x="100" width="1" height="80" fill="#a2a2a2"/><rect x="101" width="1" height="80" fill="#b0b0b0"/><rect x="102" width="1" height="80" fill="#c4c4c4"/><rect x="103" width="1" height="80" fill="#d1d1d1"/><rect x="104" width="1" height="80" fill="#dcdcdc"/><rect x="105" width="1" height="80" fill="#e1e1e1"/><rect x="106" width="1" height="80" fill="#e5e5e5"/><rect x="107" width="1" height="80" fill="#e8e8e8"/><rect x="108" width="1" height="80" fill="#e9e9e9"/><rect x="109" width="1" height="80" fill="#eaeaea"/><rect x="110" width="1" height="80" fill="#e9e9e9"/><rect x="111" width="1" height="80" fill="#e7e7e7"/><rect x="112" width="1" height="80" fill="#e5e5e5"/><rect x="113" width="1" height="80" fill="#e2e2e2"/><rect x="114" width="1" height="80" fill="#e1e1e1"/><rect x="115" width="3" height="80" fill="#dfdfdf"/><rect x="118" width="1" height="80" fill="#e1e1e1"/><rect x="119" width="1" height="80" fill="#e4e4e4"/><rect x="120" width="1" height="80" fill="#e6e6e6"/><rect x="121" width="1" height="80" fill="#e7e7e7"/><rect x="122" width="1" height="80" fill="#e9e9e9"/><rect x="123" width="2" height="80" fill="#eaeaea"/><rect x="125" width="1" height="80" fill="#e8e8e8"/><rect x="126" width="1" height="80" fill="#e6e6e6"/><rect x="127" width="1" height="80" fill="#e2e2e2"/><rect x="128" width="1" height="80" fill="#dfdfdf"/><rect x="129" width="1" height="80" fill="#dbdbdb"/><rect x="130" width="1" height="80" fill="#cecece"/><rect x="131" width="1" height="80" fill="#c1c1c1"/><rect x="132" width="1" height="80" fill="#b4b4b4"/><rect x="133" width="1" height="80" fill="#aeaeae"/><rect x="134" width="1" height="80" fill="#afafaf"/><rect x="135" width="1" height="80" fill="#b5b5b5"/><rect x="136" width="1" height="80" fill="#c1c1c1"/><rect x="137" width="1" height="80" fill="#cccccc"/><rect x="138" width="1" height="80" fill="#d4d4d4"/><rect x="139" width="1" height="80" fill="#d6d6d6"/><rect x="140" width="1" height="80" fill="#d7d7d7"/><rect x="141" width="3" height="80" fill="#d8d8d8"/><rect x="144" width="3" height="80" fill="#d7d7d7"/><rect x="147" width="1" height="80" fill="#d8d8d8"/><rect x="148" width="1" height="80" fill="#d6d6d6"/><rect x="149" width="1" height="80" fill="#d5d5d5"/><rect x="150" width="3" height="80" fill="#d4d4d4"/><rect x="153" width="2" height="80" fill="#d3d3d3"/><rect x="155" width="7" height="80" fill="#d2d2d2"/><rect x="162" width="1" height="80" fill="#d3d3d3"/><rect x="163" width="2" height="80" fill="#d4d4d4"/><rect x="165" width="1" height="80" fill="#d5d5d5"/><rect x="166" width="2" height="80" fill="#d4d4d4"/><rect x="168" width="1" height="80" fill="#d3d3d3"/><rect x="169" width="1" height="80" fill="#d2d2d2"/><rect x="170" width="1" height="80" fill="#d0d0d0"/><rect x="171" width="1" height="80" fill="#cecece"/><rect x="172" width="1" height="80" fill="#cdcdcd"/><rect x="173" width="2" height="80" fill="#cccccc"/><rect x="175" width="1" height="80" fill="#cdcdcd"/><rect x="176" width="1" height="80" fill="#cecece"/><rect x="177" width="1" height="80" fill="#cfcfcf"/><rect x="178" width="1" height="80" fill="#d1d1d1"/><rect x="179" width="1" height="80" fill="#d3d3d3"/><rect x="180" width="1" height="80" fill="#d5d5d5"/><rect x="181" width="1" height="80" fill="#d7d7d7"/><rect x="182" width="1" height="80" fill="#d8d8d8"/><rect x="183" width="1" height="80" fill="#d9d9d9"/><rect x="184" width="1" height="80" fill="#d8d8d8"/><rect x="185" width="1" height="80" fill="#d6d6d6"/><rect x="186" width="1" height="80" fill="#d3d3d3"/><rect x="187" width="1" height="80" fill="#d1d1d1"/><rect x="188" width="1" height="80" fill="#cecece"/><rect x="189" width="1" height="80" fill="#cbcbcb"/><rect x="190" width="1" height="80" fill="#c9c9c9"/><rect x="191" width="1" height="80" fill="#c8c8c8"/><rect x="192" width="1" height="80" fill="#c4c4c4"/><rect x="193" width="1" height="80" fill="#bfbfbf"/><rect x="194" width="1" height="80" fill="#bababa"/><rect x="195" width="1" height="80" fill="#b8b8b8"/><rect x="196" width="1" height="80" fill="#b9b9b9"/><rect x="197" width="1" height="80" fill="#c2c2c2"/><rect x="198" width="1" height="80" fill="#d0d0d0"/><rect x="199" width="1" height="80" fill="#dcdcdc"/><rect x="200" width="2" height="80" fill="#e0e0e0"/><rect x="202" width="1" height="80" fill="#dfdfdf"/><rect x="203" width="1" height="80" fill="#dcdcdc"/><rect x="204" width="1" height="80" fill="#d9d9d9"/><rect x="205" width="1" height="80" fill="#d8d8d8"/><rect x="206" width="1" height="80" fill="#d7d7d7"/><rect x="207" width="1" height="80" fill="#d6d6d6"/><rect x="208" width="1" height="80" fill="#d7d7d7"/><rect x="209" width="1" height="80" fill="#d9d9d9"/><rect x="210" width="1" height="80" fill="#dddddd"/><rect x="211" width="1" height="80" fill="#e1e1e1"/><rect x="212" width="1" height="80" fill="#e4e4e4"/><rect x="213" width="1" height="80" fill="#e7e7e7"/><rect x="214" width="1" height="80" fill="#eaeaea"/><rect x="215" width="1" height="80" fill="#ececec"/><rect x="216" width="1" height="80" fill="#ededed"/><rect x="217" width="1" height="80" fill="#eeeeee"/><rect x="218" width="1" height="80" fill="#ececec"/><rect x="219" width="1" height="80" fill="#eaeaea"/><rect x="220" width="1" height="80" fill="#e7e7e7"/><rect x="221" width="1" height="80" fill="#e5e5e5"/><rect x="222" width="1" height="80" fill="#e2e2e2"/><rect x="223" width="1" height="80" fill="#e1e1e1"/><rect x="224" width="1" height="80" fill="#e2e2e2"/><rect x="225" width="1" height="80" fill="#e3e3e3"/><rect x="226" width="1" height="80" fill="#e4e4e4"/><rect x="227" width="1" height="80" fill="#e6e6e6"/><rect x="228" width="1" height="80" fill="#e8e8e8"/><rect x="229" width="1" height="80" fill="#ebebeb"/><rect x="230" width="1" height="80" fill="#eeeeee"/><rect x="231" width="1" height="80" fill="#f1f1f1"/><rect x="232" width="1" height="80" fill="#f3f3f3"/><rect x="233" width="1" height="80" fill="#f4f4f4"/><rect x="234" width="1" height="80" fill="#f5f5f5"/><rect x="235" width="2" height="80" fill="#f4f4f4"/><rect x="237" width="1" height="80" fill="#f3f3f3"/><rect x="238" width="1" height="80" fill="#f1f1f1"/><rect x="239" width="1" height="80" fill="#f0f0f0"/><rect x="240" width="2" height="80" fill="#efefef"/><rect x="242" width="1" height="80" fill="#f0f0f0"/><rect x="243" width="1" height="80" fill="#f1f1f1"/><rect x="244" width="1" height="80" fill="#f2f2f2"/><rect x="245" width="1" height="80" fill="#f4f4f4"/><rect x="246" width="1" height="80" fill="#f6f6f6"/><rect x="247" width="1" height="80" fill="#f7f7f7"/><rect x="248" width="1" height="80" fill="#f9f9f9"/><rect x="249" width="1" height="80" fill="#fafafa"/><rect x="250" width="4" height="80" fill="#fcfcfc"/><rect x="254" width="1" height="80" fill="#fafafa"/><rect x="255" width="1" height="80" fill="#f9f9f9"/><rect x="256" width="1" height="80" fill="#f8f8f8"/><rect x="257" width="1" height="80" fill="#f7f7f7"/><rect x="258" width="1" height="80" fill="#f6f6f6"/><rect x="259" width="1" height="80" fill="#f7f7f7"/><rect x="260" width="1" height="80" fill="#f8f8f8"/><rect x="261" width="1" height="80" fill="#f9f9f9"/><rect x="262" width="1" height="80" fill="#fafafa"/><rect x="263" width="1" height="80" fill="#fcfcfc"/><rect x="264" width="1" height="80" fill="#fdfdfd"/><rect x="265" width="1" height="80" fill="#fefefe"/><rect x="266" width="5" height="80" fill="#ffffff"/><rect x="271" width="1" height="80" fill="#fefefe"/><rect x="272" width="1" height="80" fill="#fdfdfd"/><rect x="273" width="1" height="80" fill="#fcfcfc"/><rect x="274" width="2" height="80" fill="#fbfbfb"/><rect x="276" width="2" height="80" fill="#fcfcfc"/><rect x="278" width="1" height="80" fill="#fdfdfd"/><rect x="279" width="1" height="80" fill="#fefefe"/><rect x="280" width="12" height="80" fill="#ffffff"/><rect x="292" width="4" height="80" fill="#fefefe"/><rect x="296" width="10" height="80" fill="#ffffff"/><rect x="306" width="1" height="80" fill="#fefefe"/><rect x="307" width="1" height="80" fill="#fdfdfd"/><rect x="308" width="2" height="80" fill="#fcfcfc"/><rect x="310" width="2" height="80" fill="#fbfbfb"/><rect x="312" width="2" height="80" fill="#fcfcfc"/><rect x="314" width="1" height="80" fill="#fdfdfd"/><rect x="315" width="4" height="80" fill="#fefefe"/><rect x="319" width="1" height="80" fill="#fdfdfd"/><rect x="320" width="1" height="80" fill="#fcfcfc"/><rect x="321" width="1" height="80" fill="#fafafa"/><rect x="322" width="1" height="80" fill="#f6f6f6"/><rect x="323" width="1" height="80" fill="#f2f2f2"/><rect x="324" width="1" height="80" fill="#e9e9e9"/><rect x="325" width="1" height="80" fill="#dedede"/><rect x="326" width="1" height="80" fill="#d4d4d4"/><rect x="327" width="1" height="80" fill="#cccccc"/><rect x="328" width="1" height="80" fill="#c7c7c7"/><rect x="329" width="1" height="80" fill="#cdcdcd"/><rect x="330" width="1" height="80" fill="#d7d7d7"/><rect x="331" width="1" height="80" fill="#e3e3e3"/><rect x="332" width="1" height="80" fill="#eeeeee"/><rect x="333" width="1" height="80" fill="#f2f2f2"/><rect x="334" width="1" height="80" fill="#f6f6f6"/><rect x="335" width="1" height="80" fill="#f7f7f7"/><rect x="336" width="1" height="80" fill="#f9f9f9"/><rect x="337" width="2" height="80" fill="#f8f8f8"/><rect x="339" width="1" height="80" fill="#f7f7f7"/><rect x="340" width="1" height="80" fill="#f6f6f6"/><rect x="341" width="2" height="80" fill="#f5f5f5"/><rect x="343" width="1" height="80" fill="#f4f4f4"/><rect x="344" width="1" height="80" fill="#f3f3f3"/><rect x="345" width="1" height="80" fill="#f4f4f4"/><rect x="346" width="1" height="80" fill="#f6f6f6"/><rect x="347" width="2" height="80" fill="#f7f7f7"/><rect x="349" width="1" height="80" fill="#f8f8f8"/><rect x="350" width="3" height="80" fill="#f9f9f9"/><rect x="353" width="1" height="80" fill="#f8f8f8"/><rect x="354" width="1" height="80" fill="#f7f7f7"/><rect x="355" width="1" height="80" fill="#f5f5f5"/><rect x="356" width="1" height="80" fill="#f4f4f4"/><rect x="357" width="1" height="80" fill="#f3f3f3"/><rect x="358" width="1" height="80" fill="#f2f2f2"/><rect x="359" width="3" height="80" fill="#f1f1f1"/><rect x="362" width="1" height="80" fill="#f2f2f2"/><rect x="363" width="2" height="80" fill="#f3f3f3"/><rect x="365" width="1" height="80" fill="#f2f2f2"/><rect x="366" width="1" height="80" fill="#f1f1f1"/><rect x="367" width="1" height="80" fill="#f0f0f0"/><rect x="368" width="1" height="80" fill="#efefef"/><rect x="369" width="1" height="80" fill="#ededed"/><rect x="370" width="1" height="80" fill="#ececec"/><rect x="371" width="1" height="80" fill="#eaeaea"/><rect x="372" width="1" height="80" fill="#e8e8e8"/><rect x="373" width="1" height="80" fill="#e7e7e7"/><rect x="374" width="4" height="80" fill="#e6e6e6"/><rect x="378" width="1" height="80" fill="#e7e7e7"/><rect x="379" width="5" height="80" fill="#e8e8e8"/><rect x="384" width="1" height="80" fill="#e7e7e7"/><rect x="385" width="1" height="80" fill="#e6e6e6"/><rect x="386" width="1" height="80" fill="#e4e4e4"/><rect x="387" width="1" height="80" fill="#e2e2e2"/><rect x="388" width="1" height="80" fill="#e1e1e1"/><rect x="389" width="1" height="80" fill="#e0e0e0"/><rect x="390" width="1" height="80" fill="#dfdfdf"/><rect x="391" width="3" height="80" fill="#dedede"/><rect x="394" width="2" height="80" fill="#dfdfdf"/><rect x="396" width="2" height="80" fill="#e0e0e0"/><rect x="398" width="2" height="80" fill="#e1e1e1"/><rect x="400" width="1" height="80" fill="#e0e0e0"/><rect x="401" width="1" height="80" fill="#dfdfdf"/><rect x="402" width="1" height="80" fill="#dedede"/><rect x="403" width="1" height="80" fill="#dcdcdc"/><rect x="404" width="1" height="80" fill="#dbdbdb"/><rect x="405" width="1" height="80" fill="#dadada"/><rect x="406" width="5" height="80" fill="#d9d9d9"/><rect x="411" width="3" height="80" fill="#dadada"/><rect x="414" width="2" height="80" fill="#d9d9d9"/><rect x="416" width="1" height="80" fill="#d8d8d8"/><rect x="417" width="1" height="80" fill="#d7d7d7"/><rect x="418" width="1" height="80" fill="#d6d6d6"/><rect x="419" width="1" height="80" fill="#d5d5d5"/><rect x="420" width="6" height="80" fill="#d4d4d4"/><rect x="426" width="3" height="80" fill="#d5d5d5"/><rect x="429" width="1" height="80" fill="#d4d4d4"/><rect x="430" width="2" height="80" fill="#d3d3d3"/><rect x="432" width="1" height="80" fill="#d1d1d1"/><rect x="433" width="1" height="80" fill="#cfcfcf"/><rect x="434" width="1" height="80" fill="#cecece"/><rect x="435" width="1" height="80" fill="#cccccc"/><rect x="436" width="1" height="80" fill="#cbcbcb"/><rect x="437" width="2" height="80" fill="#cacaca"/><rect x="439" width="6" height="80" fill="#cccccc"/><rect x="445" width="1" height="80" fill="#cacaca"/><rect x="446" width="2" height="80" fill="#c9c9c9"/><rect x="448" width="1" height="80" fill="#c8c8c8"/><rect x="449" width="1" height="80" fill="#c6c6c6"/><rect x="450" width="1" height="80" fill="#c5c5c5"/><rect x="451" width="1" height="80" fill="#c3c3c3"/><rect x="452" width="1" height="80" fill="#c2c2c2"/><rect x="453" width="4" height="80" fill="#c1c1c1"/><rect x="457" width="2" height="80" fill="#c2c2c2"/><rect x="459" width="3" height="80" fill="#c3c3c3"/><rect x="462" width="2" height="80" fill="#c4c4c4"/><rect x="464" width="1" height="80" fill="#c3c3c3"/><rect x="465" width="1" height="80" fill="#c2c2c2"/><rect x="466" width="2" height="80" fill="#c0c0c0"/><rect x="468" width="1" height="80" fill="#bfbfbf"/><rect x="469" width="1" height="80" fill="#bebebe"/><rect x="470" width="3" height="80" fill="#bdbdbd"/><rect x="473" width="1" height="80" fill="#bebebe"/><rect x="474" width="3" height="80" fill="#bdbdbd"/><rect x="477" width="2" height="80" fill="#bebebe"/><rect x="479" width="1" height="80" fill="#bcbcbc"/><rect x="480" width="1" height="80" fill="#bbbbbb"/><rect x="481" width="1" height="80" fill="#bababa"/><rect x="482" width="1" height="80" fill="#b9b9b9"/><rect x="483" width="1" height="80" fill="#b8b8b8"/><rect x="484" width="1" height="80" fill="#b7b7b7"/><rect x="485" width="1" height="80" fill="#b6b6b6"/><rect x="486" width="3" height="80" fill="#b5b5b5"/><rect x="489" width="1" height="80" fill="#b6b6b6"/><rect x="490" width="1" height="80" fill="#b7b7b7"/><rect x="491" width="1" height="80" fill="#b8b8b8"/><rect x="492" width="2" height="80" fill="#b7b7b7"/><rect x="494" width="1" height="80" fill="#b6b6b6"/><rect x="495" width="1" height="80" fill="#b5b5b5"/><rect x="496" width="1" height="80" fill="#b4b4b4"/><rect x="497" width="1" height="80" fill="#b3b3b3"/><rect x="498" width="1" height="80" fill="#b2b2b2"/><rect x="499" width="1" height="80" fill="#b0b0b0"/><rect x="500" width="1" height="80" fill="#afafaf"/><rect x="501" width="3" height="80" fill="#adadad"/><rect x="504" width="2" height="80" fill="#acacac"/><rect x="506" width="3" height="80" fill="#ababab"/><rect x="509" width="1" height="80" fill="#aaaaaa"/><rect x="510" width="1" height="80" fill="#a9a9a9"/><rect x="511" width="1" height="80" fill="#a8a8a8"/><rect x="512" width="1" height="80" fill="#a7a7a7"/><rect x="513" width="1" height="80" fill="#a6a6a6"/><rect x="514" width="2" height="80" fill="#a5a5a5"/><rect x="516" width="1" height="80" fill="#a4a4a4"/><rect x="517" width="1" height="80" fill="#a3a3a3"/><rect x="518" width="1" height="80" fill="#a1a1a1"/><rect x="519" width="2" height="80" fill="#a0a0a0"/><rect x="521" width="1" height="80" fill="#9f9f9f"/><rect x="522" width="1" height="80" fill="#9e9e9e"/><rect x="523" width="1" height="80" fill="#9d9d9d"/><rect x="524" width="1" height="80" fill="#9c9c9c"/><rect x="525" width="1" height="80" fill="#9b9b9b"/><rect x="526" width="1" height="80" fill="#9a9a9a"/><rect x="527" width="1" height="80" fill="#999999"/><rect x="528" width="1" height="80" fill="#989898"/><rect x="529" width="4" height="80" fill="#979797"/><rect x="533" width="3" height="80" fill="#969696"/><rect x="536" width="1" height="80" fill="#959595"/><rect x="537" width="1" height="80" fill="#949494"/><rect x="538" width="2" height="80" fill="#939393"/><rect x="540" width="1" height="80" fill="#929292"/><rect x="541" width="1" height="80" fill="#919191"/><rect x="542" width="1" height="80" fill="#909090"/><rect x="543" width="1" height="80" fill="#8f8f8f"/><rect x="544" width="1" height="80" fill="#8e8e8e"/><rect x="545" width="1" height="80" fill="#8d8d8d"/><rect x="546" width="1" height="80" fill="#8c8c8c"/><rect x="547" width="1" height="80" fill="#8b8b8b"/><rect x="548" width="1" height="80" fill="#8a8a8a"/><rect x="549" width="3" height="80" fill="#898989"/><rect x="552" width="2" height="80" fill="#888888"/><rect x="554" width="1" height="80" fill="#878787"/><rect x="555" width="1" height="80" fill="#868686"/><rect x="556" width="1" height="80" fill="#858585"/><rect x="557" width="4" height="80" fill="#848484"/><rect x="561" width="2" height="80" fill="#838383"/><rect x="563" width="4" height="80" fill="#828282"/><rect x="567" width="3" height="80" fill="#818181"/><rect x="570" width="1" height="80" fill="#808080"/><rect x="571" width="2" height="80" fill="#7f7f7f"/><rect x="573" width="1" height="80" fill="#7e7e7e"/><rect x="574" width="1" height="80" fill="#7d7d7d"/><rect x="575" width="2" height="80" fill="#7c7c7c"/><rect x="577" width="2" height="80" fill="#7b7b7b"/><rect x="579" width="2" height="80" fill="#7a7a7a"/><rect x="581" width="3" height="80" fill="#797979"/><rect x="584" width="2" height="80" fill="#787878"/><rect x="586" width="1" height="80" fill="#777777"/><rect x="587" width="1" height="80" fill="#767676"/><rect x="588" width="1" height="80" fill="#757575"/><rect x="589" width="1" height="80" fill="#747474"/><rect x="590" width="1" height="80" fill="#727272"/><rect x="591" width="1" height="80" fill="#717171"/><rect x="592" width="1" height="80" fill="#6f6f6f"/><rect x="593" width="1" height="80" fill="#6e6e6e"/><rect x="594" width="2" height="80" fill="#6d6d6d"/><rect x="596" width="2" height="80" fill="#6c6c6c"/><rect x="598" width="1" height="80" fill="#6b6b6b"/><rect x="599" width="2" height="80" fill="#6a6a6a"/><rect x="601" width="2" height="80" fill="#696969"/><rect x="603" width="2" height="80" fill="#686868"/><rect x="605" width="1" height="80" fill="#676767"/><rect x="606" width="1" height="80" fill="#666666"/><rect x="607" width="1" height="80" fill="#656565"/><rect x="608" width="1" height="80" fill="#646464"/><rect x="609" width="3" height="80" fill="#636363"/><rect x="612" width="6" height="80" fill="#626262"/><rect x="618" width="3" height="80" fill="#616161"/><rect x="621" width="4" height="80" fill="#606060"/><rect x="625" width="2" height="80" fill="#5f5f5f"/><rect x="627" width="2" height="80" fill="#5e5e5e"/><rect x="629" width="2" height="80" fill="#5d5d5d"/><rect x="631" width="2" height="80" fill="#5c5c5c"/><rect x="633" width="2" height="80" fill="#5b5b5b"/><rect x="635" width="5" height="80" fill="#5a5a5a"/></svg>
<div class="abs" style="left:644px;top:169px;width:2px;height:80px;background:#000"></div>
<div class="abs" style="left:6px;top:195px;width:640px;height:17px;border:1px solid #f8848a"></div>

<!-- window 2 : spc -->
<div class="abs" style="left:3px;top:258px;width:860px;height:313px;border:1px solid #2c2c2c;border-radius:6px 6px 0 0;background:linear-gradient(#98b3d2 0,#b6cfec 30px,#dce8f5 121px,#b9d1ea 122px);overflow:hidden">
 <div class="abs" style="left:0;top:0;right:0;bottom:0;border:1px solid #e4eefa;border-bottom-color:#26d7e9;border-radius:5px 5px 0 0"></div>
</div>
<div class="t" id="t2" style="left:32px;top:272px;font-size:12px;color:#000;letter-spacing:-.25px">2D_regulus.spc</div>
<!-- caption buttons -->
<div class="abs cb" style="left:753px;top:268px"></div>
<div class="abs cb" style="left:787px;top:268px"></div>
<div class="abs cb" style="left:821px;top:268px;width:32px;border-color:#5b2a2a;background:linear-gradient(#e9a99c 0,#d6705c 48%,#c03c22 52%,#d26a4e 100%)"></div>
<style>.cb{width:32px;height:18px;border:1px solid #5f7895;border-radius:3px;background:linear-gradient(#c3d6ec 0,#a9c1dd 48%,#8faccd 52%,#a6c0de 100%);box-shadow:inset 0 0 0 1px rgba(255,255,255,.45)}</style>
<svg class="abs" style="left:753px;top:268px" width="100" height="18">
 <rect x="10.500" y="9.500" width="10" height="3" fill="#f2f2f2" stroke="#4c5564"/>
 <rect x="45.5" y="4.5" width="9" height="7" fill="#f2f2f2" stroke="#4c5564"/><rect x="48.5" y="7.5" width="3" height="1" fill="#8faccd" stroke="#4c5564"/>
 <path d="M79.600 6.200l7.400 4.500M87 6.200l-7.400 4.500" stroke="#4a3030" stroke-width="4.200" stroke-linecap="round"/><path d="M79.600 6.200l7.400 4.500M87 6.200l-7.400 4.500" stroke="#f6f6f6" stroke-width="2.400" stroke-linecap="round"/>
</svg>
<!-- plot -->
<div class="abs" style="left:10px;top:289px;width:821px;height:274px;background:#c0c000"></div>
<div class="abs" style="left:13px;top:292px;width:813px;height:268px;background:#fff;border:1px solid;border-color:#808080 #c00000 #404040 #808080"></div>
<svg class="abs" style="left:13px;top:292px" width="812" height="268"><path d="M3.5,266.4 L4.2,266.2 L14.9,265.0 L22.6,262.4 L30.2,259.3 L34.0,257.3 L39.2,253.5 L44.3,248.4 L49.4,242.5 L54.5,233.0 L58.3,227.4 L62.2,217.7 L64.7,210.0 L68.6,207.0 L71.1,201.0 L73.2,181.9 L75.0,178.0 L77.0,176.8 L78.8,180.6 L81.3,184.0 L83.4,178.0 L85.2,166.6 L87.0,148.7 L88.5,138.4 L91.0,130.8 L92.8,129.0 L94.6,130.0 L96.2,138.4 L97.4,148.7 L99.2,154.3 L100.8,151.2 L102.3,135.9 L104.6,110.2 L106.1,93.6 L108.9,83.4 L111.5,76.5 L115.3,70.6 L117.9,68.8 L119.9,70.6 L122.0,79.6 L123.5,97.5 L125.1,115.3 L126.8,120.5 L128.6,110.2 L130.7,79.6 L133.2,60.4 L136.3,51.5 L138.9,48.9 L141.4,50.2 L144.0,55.3 L146.5,58.4 L149.8,58.4 L152.4,54.0 L155.7,49.7 L158.3,48.9 L160.3,50.9 L162.9,57.8 L164.9,63.0 L166.5,79.6 L168.5,97.5 L170.3,106.4 L172.3,97.5 L174.1,82.1 L175.7,69.3 L178.0,65.8 L181.8,65.3 L185.6,66.3 L187.4,65.5 L190.7,68.3 L195.8,69.6 L199.7,71.1 L204.8,71.1 L207.9,69.3 L210.4,68.3 L213.0,69.3 L215.0,69.9 L217.6,73.9 L220.6,76.2 L224.0,75.2 L227.8,70.6 L230.4,66.8 L233.4,64.0 L235.4,66.5 L238.5,72.1 L241.1,77.2 L243.6,80.3 L245.4,86.2 L247.4,93.1 L249.5,95.4 L250.8,87.5 L252.6,69.6 L253.8,59.3 L255.6,57.3 L257.7,59.3 L260.2,64.5 L263.3,67.3 L266.1,65.0 L268.4,58.1 L271.0,51.7 L273.5,47.3 L276.1,45.3 L278.1,47.3 L280.7,52.2 L283.2,57.3 L286.3,55.5 L289.6,52.2 L292.2,46.6 L294.7,41.5 L297.3,38.9 L299.8,39.4 L303.2,42.2 L306.2,44.5 L309.3,43.0 L312.6,38.9 L315.9,35.1 L319.0,32.0 L321.6,32.2 L324.6,35.3 L328.0,37.6 L331.3,36.3 L334.3,33.0 L338.2,29.7 L341.5,28.9 L345.1,30.5 L348.9,33.5 L352.2,32.5 L356.1,30.2 L359.9,27.4 L363.7,25.3 L366.3,26.9 L369.6,29.7 L373.2,31.0 L376.5,29.9 L380.1,27.6 L382.6,26.1 L385.9,27.4 L389.3,30.2 L392.3,32.2 L395.4,33.3 L398.0,32.5 L400.5,30.5 L403.8,30.2 L406.4,31.5 L408.9,35.1 L411.0,41.5 L412.8,54.2 L414.8,69.6 L417.1,81.8 L419.2,72.1 L421.0,55.5 L422.5,44.0 L425.1,37.6 L427.6,35.3 L430.7,36.3 L434.5,38.9 L437.6,40.4 L440.9,37.6 L444.7,35.6 L448.1,34.8 L450.6,37.4 L453.7,40.4 L457.5,43.0 L460.1,41.5 L462.6,40.7 L465.9,42.2 L469.0,45.3 L472.3,49.6 L475.9,52.4 L479.7,52.2 L483.1,50.4 L486.4,50.4 L489.5,52.4 L492.5,56.3 L495.8,58.8 L498.9,60.1 L502.2,58.6 L504.8,58.1 L507.4,56.8 L509.9,58.8 L513.2,61.9 L516.8,64.5 L520.1,64.2 L523.2,63.4 L526.5,63.9 L530.1,65.8 L533.4,68.4 L537.2,69.4 L541.1,68.4 L544.9,68.1 L548.0,70.2 L551.3,74.0 L553.8,76.6 L555.9,78.6 L558.2,76.6 L561.5,75.8 L564.6,76.1 L566.6,78.6 L568.7,78.6 L571.7,82.4 L575.1,85.8 L578.9,86.3 L582.7,85.0 L586.3,84.0 L589.1,83.7 L592.2,86.8 L595.2,88.1 L598.1,90.4 L601.1,89.3 L603.7,89.9 L607.5,89.1 L610.6,91.9 L613.9,94.5 L617.7,97.3 L620.3,97.0 L623.6,94.5 L626.7,95.5 L630.0,97.5 L633.1,100.3 L636.4,103.9 L639.5,104.9 L642.8,106.0 L646.1,106.5 L649.7,109.3 L653.5,111.6 L656.6,112.6 L659.1,116.2 L662.5,116.9 L665.8,120.0 L668.9,122.1 L671.9,124.4 L675.8,124.9 L679.6,125.5 L684.7,128.4 L688.5,130.4 L692.3,133.5 L696.2,136.5 L700.0,137.6 L703.8,138.8 L707.7,141.4 L711.5,142.2 L715.3,143.4 L719.2,143.7 L723.0,145.0 L726.8,146.5 L729.9,148.8 L733.7,149.8 L737.6,151.6 L741.4,152.4 L745.2,153.7 L748.6,156.7 L751.9,160.3 L755.5,162.9 L759.3,164.4 L763.1,166.2 L767.0,167.5 L770.8,169.5 L774.6,172.1 L778.5,172.6 L782.3,172.8 L786.1,173.8 L790.0,174.6 L793.8,175.1 L797.6,176.4 L801.5,177.9 L804.8,179.5 L808.6,180.5 L812.0,180.5" fill="none" stroke="#0000ff" stroke-width="1" shape-rendering="crispEdges"/></svg>
<!-- side toolbar -->
<div class="abs" style="left:831px;top:289px;width:24px;height:274px;background:#f0f0f0"></div>
<div class="abs" style="left:835px;top:362px;width:17px;height:1px;background:#a0a0a0"></div>
<div class="abs" style="left:835px;top:531px;width:16px;height:1px;background:#a0a0a0"></div>

<!-- h scrollbar -->
<div class="abs" style="left:3px;top:579px;width:939px;height:17px;background:#f0f0f0"></div>
<div class="abs" style="left:28px;top:580px;width:897px;height:15px;background:#cdcdcd"></div>
<svg class="abs" style="left:3px;top:579px" width="939" height="17"><path d="M13.5 4.5l-4 4 4 4M928.500 4.500l4 4-4 4" fill="none" stroke="#404040" stroke-width="1.8"/></svg>

<!-- status bar -->
<div class="abs" style="left:1px;top:605px;width:952px;height:20px;border:1px solid #5e5e5e"></div>
<div class="abs" style="left:3px;top:607px;width:439px;height:16px;border:1px solid;border-color:#696969 #fff #fff #808080;box-shadow:inset 1px 0 0 #696969"></div>
<style>.st{top:610px;font-size:10px;-webkit-text-stroke:.25px #000}</style>
<div class="t st" style="left:6.0px;letter-spacing:-0.259px">C:\_Thomas\</div>
<div class="t st" style="left:60.4px;letter-spacing:-0.051px">Astronomie\</div>
<div class="t st" style="left:113.2px;letter-spacing:-0.146px">Astronomie_sonstiges\</div>
<div class="t st" style="left:211.3px;letter-spacing:-0.176px">Spektroskopie\</div>
<div class="t st" style="left:275.0px;letter-spacing:-0.166px">_reduction_VSpec\</div>
<div class="t st" style="left:356.7px;letter-spacing:-0.527px">2D_regulus.spc</div>
</body></html>
